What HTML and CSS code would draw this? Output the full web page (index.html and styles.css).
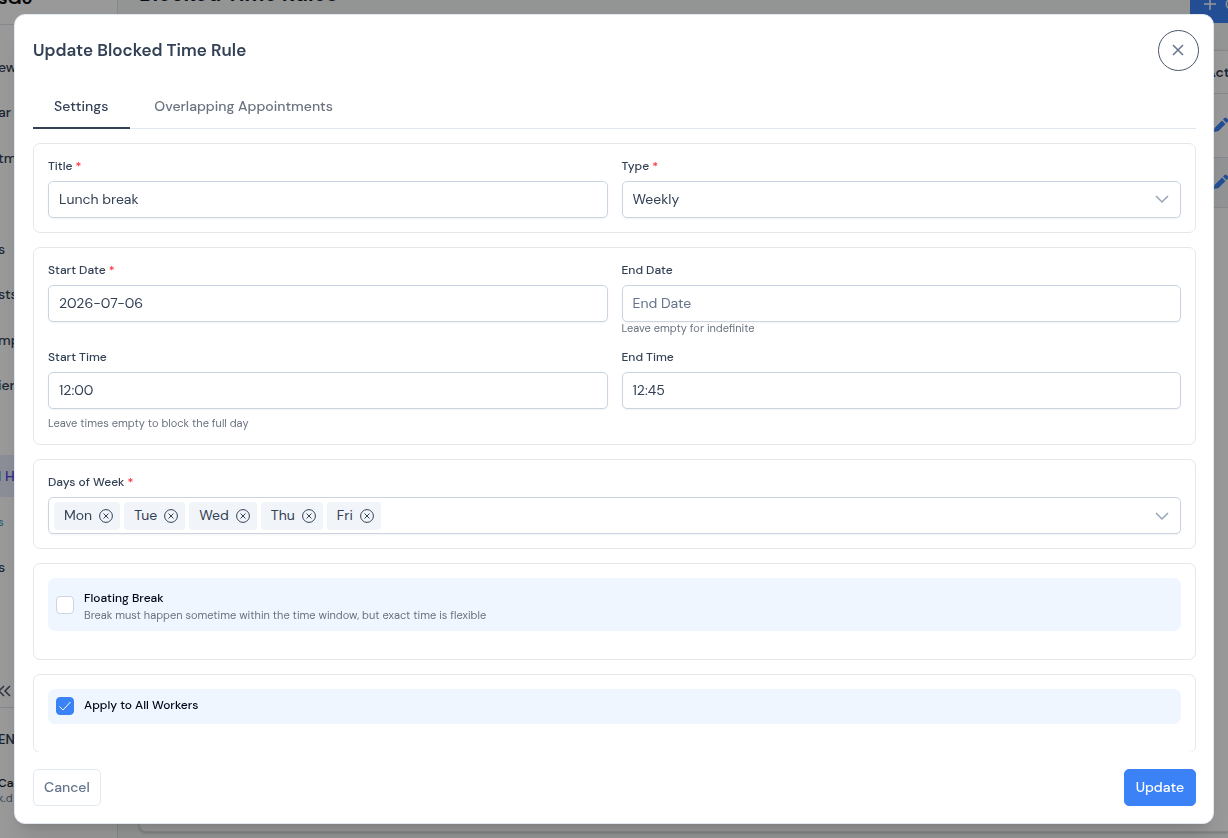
FILE: index.html
```html
<!DOCTYPE html>
<html lang="en">
  <head>
    <meta charset="UTF-8" />
    <meta name="viewport" content="width=device-width, initial-scale=1.0" />
    <title>Blocked Time Rules</title>
    <link rel="stylesheet" href="styles.css">
  </head>
  <body>
    <!-- page behind the dialog -->
    <div class="app">
      <aside class="sidebar">
        <div class="logo">sGo</div>
        <nav class="menu">
          <a href="#">ew</a>
          <a href="#">ar</a>
          <a href="#">tm</a>
          <a></a>
          <a href="#">s</a>
          <a href="#">sts</a>
          <a href="#">mpl</a>
          <a href="#">ier</a>
          <a></a>
          <a href="#" class="active"><span class="cyan">l</span> H</a>
          <a href="#" class="cyan">s</a>
          <a href="#">s</a>
        </nav>
        <div class="collapse">
          <svg width="14" height="14" viewBox="0 0 14 14"><path d="M6 2 1 7l5 5M12 2 7 7l5 5" /></svg>
        </div>
        <p class="lang">EN</p>
        <div class="user">
          <p>Car</p>
          <small>k.d</small>
        </div>
      </aside>
      <main>
        <div class="topbar">
          <h1>Blocked Time Rules</h1>
          <button class="create">
            <svg width="14" height="14" viewBox="0 0 14 14"><path d="M7 1v12M1 7h12" /></svg>
            C
          </button>
        </div>
        <div class="tablecard">
          <table>
            <thead>
              <tr><th></th><th class="act">Act</th></tr>
            </thead>
            <tbody>
              <tr>
                <td></td>
                <td class="act">
                  <svg class="pencil" width="16" height="16" viewBox="0 0 16 16"><path d="M1.500 11 9 3.500 12.500 7 5.500 14 1 15zM10 2.500l1.500-1.500q1-.8 2 0l1.500 1.500q.8 1 0 2L13.500 6z" /></svg>
                </td>
              </tr>
              <tr class="even">
                <td></td>
                <td class="act">
                  <svg class="pencil" width="16" height="16" viewBox="0 0 16 16"><path d="M1.500 11 9 3.500 12.500 7 5.500 14 1 15zM10 2.500l1.500-1.500q1-.8 2 0l1.500 1.500q.8 1 0 2L13.500 6z" /></svg>
                </td>
              </tr>
            </tbody>
          </table>
        </div>
      </main>
    </div>

    <div class="backdrop">
      <form class="dialog" role="dialog" aria-labelledby="dialog-title">
        <header>
          <h2 id="dialog-title">Update Blocked Time Rule</h2>
          <button type="button" class="close" aria-label="Close">
            <svg width="15" height="15" viewBox="0 0 15 15"><path d="M2 2l10 10M12 2 2 12" /></svg>
          </button>
        </header>

        <div class="content">
          <div class="tabs" role="tablist">
            <button type="button" role="tab" class="tab selected">Settings</button>
            <button type="button" role="tab" class="tab">Overlapping Appointments</button>
          </div>

          <div class="panel">
            <section class="card">
              <div class="row">
                <div class="field">
                  <label for="title">Title <span class="req">*</span></label>
                  <input type="text" id="title" value="Lunch break" />
                </div>
                <div class="field">
                  <label for="type">Type <span class="req">*</span></label>
                  <div class="select">
                    <select id="type">
                      <option>Weekly</option>
                    </select>
                    <svg class="chevron" width="14" height="14" viewBox="0 0 14 14"><path d="M1 4l6 6 6-6" /></svg>
                  </div>
                </div>
              </div>
            </section>

            <section class="card">
              <div class="row">
                <div class="field">
                  <label for="start-date">Start Date <span class="req">*</span></label>
                  <input type="text" id="start-date" value="2026-07-06" />
                </div>
                <div class="field">
                  <label for="end-date">End Date</label>
                  <input type="text" id="end-date" placeholder="End Date" />
                  <small class="hint">Leave empty for indefinite</small>
                </div>
              </div>
              <div class="row">
                <div class="field">
                  <label for="start-time">Start Time</label>
                  <input type="text" id="start-time" value="12:00" />
                </div>
                <div class="field">
                  <label for="end-time">End Time</label>
                  <input type="text" id="end-time" value="12:45" />
                </div>
              </div>
              <small class="hint below">Leave times empty to block the full day</small>
            </section>

            <section class="card">
              <div class="field">
                <label for="days">Days of Week <span class="req">*</span></label>
                <div class="multiselect">
                  <span class="chip"><span>Mon</span>
                    <button type="button" aria-label="Remove Mon"><svg width="14" height="14" viewBox="0 0 14 14"><circle cx="7" cy="7" r="6.400" /><path d="M4.500 4.500l5 5M9.500 4.500l-5 5" /></svg></button>
                  </span>
                  <span class="chip"><span>Tue</span>
                    <button type="button" aria-label="Remove Tue"><svg width="14" height="14" viewBox="0 0 14 14"><circle cx="7" cy="7" r="6.400" /><path d="M4.500 4.500l5 5M9.500 4.500l-5 5" /></svg></button>
                  </span>
                  <span class="chip"><span>Wed</span>
                    <button type="button" aria-label="Remove Wed"><svg width="14" height="14" viewBox="0 0 14 14"><circle cx="7" cy="7" r="6.400" /><path d="M4.500 4.500l5 5M9.500 4.500l-5 5" /></svg></button>
                  </span>
                  <span class="chip"><span>Thu</span>
                    <button type="button" aria-label="Remove Thu"><svg width="14" height="14" viewBox="0 0 14 14"><circle cx="7" cy="7" r="6.400" /><path d="M4.500 4.500l5 5M9.500 4.500l-5 5" /></svg></button>
                  </span>
                  <span class="chip"><span>Fri</span>
                    <button type="button" aria-label="Remove Fri"><svg width="14" height="14" viewBox="0 0 14 14"><circle cx="7" cy="7" r="6.400" /><path d="M4.500 4.500l5 5M9.500 4.500l-5 5" /></svg></button>
                  </span>
                  <input type="text" id="days" />
                  <svg class="chevron" width="14" height="14" viewBox="0 0 14 14"><path d="M1 4l6 6 6-6" /></svg>
                </div>
              </div>
            </section>

            <section class="card roomy">
              <div class="check">
                <input type="checkbox" id="floating" />
                <div class="checktext">
                  <label for="floating">Floating Break</label>
                  <small class="hint">Break must happen sometime within the time window, but exact time is flexible</small>
                </div>
              </div>
            </section>

            <section class="card roomy">
              <div class="check single">
                <span class="tick">
                  <input type="checkbox" id="all-workers" checked />
                  <svg width="14" height="14" viewBox="0 0 14 14"><path d="M1.500 7.500 5 11l7.500-8" /></svg>
                </span>
                <label for="all-workers">Apply to All Workers</label>
              </div>
            </section>
          </div>
        </div>

        <footer>
          <button type="button" class="btn cancel">Cancel</button>
          <button type="submit" class="btn update">Update</button>
        </footer>
      </form>
    </div>
  </body>
</html>
```

FILE: styles.css
```css
* {
  padding: 0;
  margin: 0;
  box-sizing: border-box;
}

body {
  font-family: "DM Sans", Inter, sans-serif;
  font-size: 14px;
  color: #334155;
  overflow: hidden;
}

button,
input,
select {
  font: inherit;
  color: inherit;
}

button {
  background: none;
  border: none;
  cursor: pointer;
}

svg {
  display: block;
  flex: none;
  fill: none;
  stroke: currentColor;
}

/* page behind the dialog */

.app {
  display: flex;
  height: 100vh;
  overflow: hidden;
  background-color: #f5f9f7;
}

.sidebar {
  flex: none;
  width: 120px;
  margin-left: -2px;
  background-color: #fff;
  border-right: 1px solid #dfe3e8;
  font-weight: 500;
}

.logo {
  height: 27px;
  margin-top: -2px;
  border-bottom: 1px solid #dfe3e8;
  color: #111;
  font-size: 18px;
  font-weight: 700;
  line-height: 0;
}

.menu {
  display: flex;
  flex-direction: column;
  justify-content: space-between;
  height: 542px;
  margin-top: 21px;
}

.menu a {
  height: 42px;
  line-height: 42px;
  color: #334155;
  text-decoration: none;
}

.menu .active {
  background-color: #e8ecfb;
  color: #4f46e5;
}

.menu .cyan {
  color: #3f9fb5;
}

.menu a.cyan {
  font-size: 11px;
}

.collapse {
  height: 120px;
  padding-bottom: 9px;
  display: flex;
  align-items: flex-end;
  border-bottom: 1px solid #dfe3e8;
  color: #475569;
  stroke-width: 1.5;
}

.lang {
  margin-top: 24px;
  line-height: 16px;
  font-size: 13px;
  font-weight: 600;
}

.user {
  margin-top: 27px;
  font-size: 12px;
  line-height: 16px;
  color: #0f172a;
}

.user small {
  display: block;
  font-size: 11px;
  font-weight: 400;
  line-height: 14px;
  color: #64748b;
}

main {
  flex: 1;
  min-width: 0;
  display: flex;
  flex-direction: column;
  padding: 0 0 6px 21px;
}

.topbar {
  display: flex;
  justify-content: space-between;
  height: 37px;
  margin-top: -14px;
}

h1 {
  font-size: 21px;
  font-weight: 700;
  line-height: 16px;
  color: #0f172a;
}

.create {
  display: flex;
  align-items: center;
  gap: 8px;
  width: 38px;
  padding: 0 0 2px 13px;
  overflow: hidden;
  background-color: #3b82f6;
  color: #fff;
  stroke-width: 1.5;
}

.tablecard {
  flex: 1;
  margin-top: 27px;
  background-color: #fff;
  border: 1px solid #dfe3e8;
  border-right: none;
  border-radius: 7px 0 0 7px;
  box-shadow: 0 1px 3px rgba(0, 0, 0, 0.2);
}

table {
  width: 100%;
  border-collapse: collapse;
  table-layout: fixed;
}

tr {
  height: 64px;
  border-bottom: 1px solid #dfe3e8;
}

thead tr {
  height: 42px;
}

.even {
  height: 50px;
  background-color: #f1f5f9;
}

.act {
  width: 22px;
  text-align: left;
  font-weight: 600;
}

.pencil {
  margin-left: 7px;
  fill: #3b82f6;
  stroke: none;
}

/* dialog */

.backdrop {
  position: fixed;
  inset: 0;
  display: flex;
  padding: 14px;
  background-color: rgba(0, 0, 0, 0.4);
}

.dialog {
  flex: 1;
  min-width: 0;
  display: flex;
  flex-direction: column;
  overflow: hidden;
  background-color: #fff;
  border: 1px solid #e2e8f0;
  border-radius: 11px;
  box-shadow: 0 20px 25px -5px rgba(0, 0, 0, 0.1), 0 8px 10px -6px rgba(0, 0, 0, 0.1);
}

header {
  display: flex;
  align-items: center;
  justify-content: space-between;
  padding: 15px 14px 15px 18px;
}

h2 {
  padding-bottom: 2px;
  font-size: 17px;
  font-weight: 600;
}

.close {
  display: grid;
  place-items: center;
  width: 41px;
  height: 41px;
  border: 1px solid #475569;
  border-radius: 50%;
  color: #64748b;
  stroke-width: 1.5;
}

.content {
  flex: 1;
  min-height: 0;
  overflow: auto;
  scrollbar-width: none;
  padding: 0 17px 0 18px;
}

.tabs {
  display: flex;
  gap: 3px;
  border-bottom: 1px solid #e2e8f0;
}

.tab {
  margin-bottom: -1px;
  padding: 12px 21px;
  border-bottom: 2px solid transparent;
  color: #6b7280;
  font-weight: 500;
  line-height: 17px;
}

.selected {
  padding-right: 22px;
  border-color: #334155;
  color: #334155;
}

.panel {
  display: flex;
  flex-direction: column;
  gap: 14px;
  padding-top: 14px;
}

.card {
  padding: 14px;
  border: 1px solid #e5e7eb;
  border-radius: 7px;
}

.roomy {
  padding-bottom: 28px;
}

.row {
  display: grid;
  grid-template-columns: 1fr 1fr;
  gap: 14px;
}

.row + .row {
  margin-top: 14px;
}

label {
  display: block;
  font-size: 12px;
  font-weight: 500;
  line-height: 16px;
}

.field label {
  margin-bottom: 7px;
}

.req {
  color: #fb2c36;
}

.field input,
select,
.multiselect {
  display: block;
  width: 100%;
  height: 37px;
  padding: 0 10px 2px;
  background-color: #fff;
  border: 1px solid #cbd5e1;
  border-radius: 5px;
  box-shadow: 0 1px 2px rgba(18, 18, 23, 0.05);
}

input::placeholder {
  color: #64748b;
}

.select {
  position: relative;
}

select {
  appearance: none;
}

.chevron {
  color: #94a3b8;
  stroke-width: 1.5;
}

.select .chevron {
  position: absolute;
  top: 11px;
  right: 12px;
  pointer-events: none;
}

.hint {
  display: block;
  font-size: 11px;
  line-height: 13px;
  color: #6b7280;
}

.below {
  margin-top: 7px;
  line-height: 14px;
}

.field .multiselect {
  display: flex;
  align-items: center;
  gap: 4px;
  padding: 0 11px 0 5px;
}

.chip {
  display: flex;
  align-items: center;
  gap: 7px;
  height: 28px;
  padding: 0 7px 0 10px;
  background-color: #f1f5f9;
  border-radius: 4px;
}

.chip span {
  padding-bottom: 2px;
}

.multiselect input {
  flex: 1;
  width: auto;
  min-width: 0;
  height: 28px;
  border: none;
  box-shadow: none;
}

.check {
  display: flex;
  align-items: center;
  gap: 10px;
  padding: 10px 8px 9px;
  background-color: #eff6ff;
  border-radius: 7px;
  color: #020617;
}

.single {
  align-items: flex-start;
  padding: 8px 8px 9px;
}

.checktext label {
  line-height: 20px;
}

.checktext .hint {
  line-height: 14px;
}

.check input {
  display: block;
  appearance: none;
  width: 18px;
  height: 18px;
  background-color: #fff;
  border: 1px solid #cbd5e1;
  border-radius: 4px;
}

.check input:checked {
  background-color: #3b82f6;
  border-color: #3b82f6;
}

.tick {
  position: relative;
}

.tick svg {
  position: absolute;
  inset: 2px;
  color: #fff;
  pointer-events: none;
}

footer {
  display: flex;
  justify-content: space-between;
  padding: 17px 17px 17px 18px;
}

.btn {
  height: 37px;
  padding: 0 10px 2px;
  border: 1px solid #e2e8f0;
  border-radius: 5px;
  color: #64748b;
  font-weight: 500;
}

.update {
  padding: 0 11px 2px;
  background-color: #3b82f6;
  border-color: #3b82f6;
  color: #fff;
}
```
